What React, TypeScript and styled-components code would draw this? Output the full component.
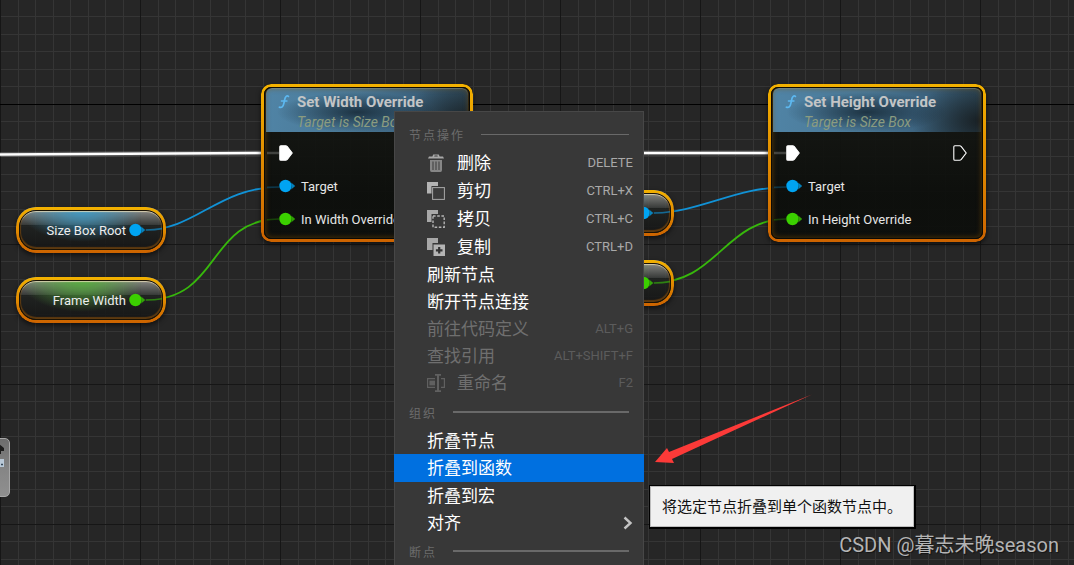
import React from "react";
import styled, { createGlobalStyle } from "styled-components";

const latin = `Roboto, "Noto Sans CJK SC", sans-serif`;
const cjk = `"Noto Sans CJK SC", Roboto, sans-serif`;

const GlobalStyle = createGlobalStyle`
  * { box-sizing: border-box; }
  body { margin: 0; background: #262626; font-family: ${latin}; }
`;

const line = (dir: string, color: string) => `linear-gradient(${dir}, ${color} 1px, transparent 1px)`;

const Graph = styled.main`
  position: relative;
  min-height: 100vh;
  overflow: hidden;
  background-color: #262626;
  background-image: ${line("to bottom", "#000")}, ${line("to right", "#161616")}, ${line("to bottom", "#161616")},
    ${line("to right", "#353535")}, ${line("to right", "#353535")}, ${line("to bottom", "#353535")},
    ${line("to bottom", "#353535")};
  background-size: 100% 1000px, 140px 100%, 100% 140px, 35px 100%, 35px 100%, 100% 35px, 100% 35px;
  background-position: 0 104px, 0 0, 0 104px, 0 0, 18px 0, 0 34px, 0 16px;
`;

const Wires = styled.svg`
  position: absolute;
  inset: 0;
  width: 100%;
  height: 100%;
  fill: none;
  pointer-events: none;
`;

const NodeFrame = styled.article<{ $x: number; $y: number; $w: number }>`
  position: absolute;
  isolation: isolate;
  left: ${(p) => p.$x}px;
  top: ${(p) => p.$y}px;
  width: ${(p) => p.$w}px;
  padding: 4px 5px 9px;
  border-radius: 10px;
  box-shadow: 0 2px 5px rgba(0, 0, 0, 0.6);
  background: linear-gradient(rgba(22, 24, 20, 0.9), rgba(12, 14, 11, 0.94) 70%);

  &::before {
    content: "";
    position: absolute;
    inset: 0;
    border-radius: inherit;
    padding: 3px;
    background: linear-gradient(#f3b200, #e08a00 50%, #cc6300);
    mask: linear-gradient(#000 0 0) content-box exclude, linear-gradient(#000 0 0);
  }

  &::after {
    content: "";
    position: absolute;
    inset: 3px;
    border-radius: 7px;
    border: 1px solid #0b0a06;
    box-shadow: inset 0 0 5px 1px rgba(130, 80, 0, 0.45);
    pointer-events: none;
  }
`;

const NodeHeader = styled.header`
  display: grid;
  grid-template-columns: 16px 1fr;
  column-gap: 4px;
  height: 44px;
  padding: 4px 11px 0;
  border-radius: 6px 6px 0 0;
  background: radial-gradient(ellipse 80px 20px at 45% 55%, rgba(18, 34, 46, 0.8), transparent),
    radial-gradient(ellipse 70px 40px at 100% 75%, rgba(20, 24, 26, 0.85), transparent),
    linear-gradient(100deg, #5084a6 0%, #4a7896 45%, #3d6480 70%, #2f4a5a 100%);
  box-shadow: inset 0 1px 0 rgba(130, 170, 190, 0.5);
`;

const NodeTitle = styled.h2`
  margin: 0;
  font-size: 15px;
  line-height: 20px;
  font-weight: 700;
  color: #c3c5c6;
  white-space: nowrap;
`;

const NodeSubtitle = styled.p`
  grid-column: 2;
  margin: 0;
  font-size: 14px;
  line-height: 18px;
  font-style: italic;
  color: #8b9c80;
  white-space: nowrap;
`;

const PinList = styled.div`
  display: flex;
  flex-direction: column;
  gap: 5px;
  padding: 7px 11px 0 13px;
`;

const PinRow = styled.div`
  display: flex;
  align-items: center;
  gap: 5px;
  height: 28px;
  font-size: 13px;
  color: #e6e6e6;
  white-space: nowrap;
`;

const Spacer = styled.span`
  flex: 1;
`;

const PillFrame = styled.article<{ $x: number; $y: number; $glow: string }>`
  position: absolute;
  isolation: isolate;
  left: ${(p) => p.$x}px;
  top: ${(p) => p.$y}px;
  width: 150px;
  height: 46px;
  padding: 0 20px;
  display: flex;
  align-items: center;
  justify-content: flex-end;
  gap: 3px;
  border-radius: 20px;
  font-size: 13px;
  color: #ededed;
  white-space: nowrap;
  box-shadow: 0 2px 5px rgba(0, 0, 0, 0.6);
  background: radial-gradient(ellipse 62px 32px at 44% 6%, ${(p) => p.$glow}, transparent),
    linear-gradient(rgba(150, 150, 145, 0.85) 8%, rgba(62, 65, 63, 0.85) 38%, rgba(32, 35, 33, 0.9) 40%, rgba(20, 20, 20, 0.9));

  &::before {
    content: "";
    position: absolute;
    inset: 0;
    border-radius: inherit;
    padding: 3px;
    background: linear-gradient(#f3b200, #e08a00 50%, #cc6300);
    mask: linear-gradient(#000 0 0) content-box exclude, linear-gradient(#000 0 0);
  }

  &::after {
    content: "";
    position: absolute;
    inset: 3px;
    border-radius: 17px;
    border: 1px solid #1a1204;
    box-shadow: inset 0 2px 1px -1px rgba(235, 225, 190, 0.8), inset 0 -1px 1px 1px rgba(130, 75, 10, 0.65);
  }
`;

const PinIcon = styled.svg`
  position: relative;
  z-index: 1;
  width: 17px;
  height: 16px;
  flex: none;
`;

const Menu = styled.div`
  position: absolute;
  left: 394px;
  top: 111px;
  width: 250px;
  padding-top: 7px;
  border: 1px solid #474747;
  background: #383838;
  font-family: ${cjk};
`;

const MenuHeading = styled.div<{ $thin?: boolean }>`
  display: flex;
  align-items: center;
  gap: 16px;
  height: 30px;
  padding: 0 14px;
  font-size: 12px;
  letter-spacing: 2px;
  color: #6c6c6c;

  &::after {
    content: "";
    flex: 1;
    height: ${(p) => (p.$thin ? 1 : 2)}px;
    background: #696969;
  }
`;

const MenuItem = styled.button<{ $tall?: boolean; $active?: boolean }>`
  display: flex;
  align-items: center;
  gap: 12px;
  width: calc(100% + 2px);
  height: ${(p) => (p.$tall ? 28 : 27)}px;
  margin: 0 -1px;
  padding: 0 11px 0 33px;
  border: 0;
  background: ${(p) => (p.$active ? "#0070e0" : "transparent")};
  font-family: inherit;
  font-size: 17px;
  line-height: 24px;
  color: #fff;
  text-align: left;
  white-space: nowrap;

  &:disabled {
    color: #6f6f6f;
  }

  kbd {
    margin-left: auto;
    font-family: ${latin};
    font-size: 13px;
    color: #a9a9a9;
  }

  &:disabled kbd {
    color: #5c5c5c;
  }
`;

const ItemLabel = styled.span`
  padding-bottom: 2px;
`;

const ItemIcon = styled.svg`
  width: 18px;
  height: 18px;
  flex: none;
`;

const Chevron = styled.svg`
  width: 10px;
  height: 14px;
  margin-left: auto;
`;

const Tooltip = styled.div`
  position: absolute;
  left: 649px;
  top: 485px;
  padding: 7px 12px 9px;
  border: solid #000;
  border-width: 1px 2px 2px 1px;
  box-shadow: inset 0 0 0 1px #bdbdbd;
  background: #f0f0f0;
  font-family: ${cjk};
  font-size: 15px;
  line-height: 25px;
  color: #111;
  white-space: nowrap;
`;

const Watermark = styled.div`
  position: absolute;
  right: 15px;
  bottom: 6px;
  font-size: 20px;
  line-height: 28px;
  color: #b4b4b4;
  text-shadow: 1px 1px 1px rgba(0, 0, 0, 0.5);
  white-space: nowrap;
`;

const Arrow = styled.svg`
  position: absolute;
  left: 654px;
  top: 392px;
  width: 160px;
  height: 74px;
`;

const SidePanel = styled.aside`
  position: absolute;
  left: -40px;
  top: 438px;
  width: 50px;
  height: 59px;
  border: 1px solid #a8a8a8;
  border-radius: 5px;
  background: linear-gradient(#6d6d6d, #868686 55%, #8f8f8f);

  svg {
    position: absolute;
    right: 0;
    top: 0;
    width: 10px;
    height: 57px;
  }
`;

const BLUE = "#00a4f2";
const GREEN = "#3bd000";

function DataPin({ color }: { color: string }) {
  return (
    <PinIcon viewBox="0 0 17 16">
      <circle cx="6.5" cy="8" r="6.2" fill={color} />
      <path d="M12.2 4.4 L16.2 8 L12.2 11.6 Q13.6 8 12.2 4.4Z" fill={color} opacity="0.75" />
    </PinIcon>
  );
}

function ExecPin({ filled }: { filled?: boolean }) {
  return (
    <PinIcon viewBox="0 0 17 16">
      <path
        d="M1.8 .8 H6.6 Q7.6 .8 8.3 1.6 L13.2 8 L8.3 14.4 Q7.6 15.2 6.6 15.2 H1.8 Q.8 15.2 .8 14.2 V1.8 Q.8 .8 1.8 .8Z"
        fill={filled ? "#fff" : "#0d0f0c"}
        stroke="#fff"
        strokeWidth="1.1"
      />
    </PinIcon>
  );
}

function FunctionIcon() {
  return (
    <svg width="16" height="20" viewBox="0 0 16 20" fill="none" stroke="#5db8f0" strokeLinecap="round">
      <path d="M11.4 4.4 Q9.6 3 8.3 5.6 Q7.5 8 6.8 11.6 Q5.8 16.4 2.4 15.2" strokeWidth="1.7" />
      <path d="M4.4 9 H10" strokeWidth="1.4" />
    </svg>
  );
}

function FunctionNode({ x, width, title, label, output }: { x: number; width: number; title: string; label: string; output?: boolean }) {
  return (
    <NodeFrame $x={x} $y={84} $w={width}>
      <NodeHeader>
        <FunctionIcon />
        <NodeTitle>{title}</NodeTitle>
        <NodeSubtitle>Target is Size Box</NodeSubtitle>
      </NodeHeader>
      <PinList>
        <PinRow>
          <ExecPin filled />
          <Spacer />
          {output && <ExecPin />}
        </PinRow>
        <PinRow>
          <DataPin color={BLUE} />
          Target
        </PinRow>
        <PinRow>
          <DataPin color={GREEN} />
          {label}
        </PinRow>
      </PinList>
    </NodeFrame>
  );
}

function VariableNode({ x, y, color, glow, label }: { x: number; y: number; color: string; glow: string; label?: string }) {
  return (
    <PillFrame $x={x} $y={y} $glow={glow}>
      {label}
      <DataPin color={color} />
    </PillFrame>
  );
}

const TrashIcon = () => (
  <ItemIcon viewBox="0 0 18 18">
    <path d="M2 2.4 H5.4 L6.2 .4 H11.8 L12.6 2.4 H16 L17 4.6 H1Z M7.2 2.4 H10.8 L10.4 1.5 H7.6Z" fill="#a8a8a8" fillRule="evenodd" />
    <path d="M3 6 H15 V16 Q15 18 13.4 18 H4.6 Q3 18 3 16Z" fill="#868686" />
    <path d="M6 7.5 V16 M9 7.5 V16 M12 7.5 V16" stroke="#484848" strokeWidth="1.2" />
  </ItemIcon>
);

const CutIcon = () => (
  <ItemIcon viewBox="0 0 18 18">
    <path d="M0 0 H11 V4 H4.5 V11.5 H0Z" fill="#b4b4b4" />
    <rect x="5.6" y="5.6" width="11.8" height="11.8" fill="#3c3c3c" stroke="#a8a8a8" />
  </ItemIcon>
);

const CopyIcon = () => (
  <ItemIcon viewBox="0 0 18 18">
    <path d="M0 0 H11 V4 H4.5 V12 H0Z" fill="#a8a8a8" />
    <rect x="6" y="6" width="11.2" height="11.2" fill="none" stroke="#b4b4b4" strokeWidth="1.4" strokeDasharray="2.6 1.6" />
  </ItemIcon>
);

const DuplicateIcon = () => (
  <ItemIcon viewBox="0 0 18 18">
    <path d="M0 0 H11 V5 H5.5 V12 H0Z" fill="#a8a8a8" />
    <rect x="6.5" y="6.5" width="11.5" height="11.5" fill="#b4b4b4" />
    <path d="M12.2 9 V15.6 M8.9 12.3 H15.5" stroke="#333" strokeWidth="2.2" />
  </ItemIcon>
);

const RenameIcon = () => (
  <ItemIcon viewBox="0 0 18 18" fill="none" stroke="#606060">
    <path d="M8 4.6 H.6 V13.4 H8 M14 4.6 H17.4 V13.4 H14" strokeWidth="1.2" />
    <rect x="2.4" y="6.6" width="5.6" height="4.8" fill="#606060" stroke="none" />
    <path d="M8 .8 H14 M8 17.2 H14 M11 .8 V17.2" strokeWidth="2" />
  </ItemIcon>
);

export default function App() {
  return (
    <>
      <GlobalStyle />
      <Graph>
        <Wires>
          <g strokeWidth="5" stroke="#fff" opacity="0.2">
            <path d="M0 154.5 L264 153" />
            <path d="M600 153 H770" />
          </g>
          <g strokeWidth="2.4" stroke="#fff">
            <path d="M0 154.5 L264 153" />
            <path d="M600 153 H770" />
          </g>
          <g strokeWidth="1.8" stroke="#1192d6">
            <path d="M145 230 C196 230 218 187 280 187" />
            <path d="M652 213 C700 213 735 187 788 187" />
          </g>
          <g strokeWidth="1.8" stroke="#37b80c">
            <path d="M145 300 C222 300 206 219 280 219" />
            <path d="M652 283 C718 283 724 219 788 219" />
          </g>
        </Wires>

        <SidePanel>
          <svg viewBox="0 0 10 57">
            <path d="M0 5 L5 9 V12 H2 V15 H0Z" fill="#1d1d1d" />
            <rect x="0" y="20" width="5" height="8" fill="#b9c8d6" />
            <path d="M0 25.5 H1 M2 25.5 H4" stroke="#34485a" strokeWidth="1.5" />
          </svg>
        </SidePanel>

        <VariableNode x={16} y={207} color={BLUE} glow="rgba(60, 155, 200, 0.95)" label="Size Box Root" />
        <VariableNode x={16} y={277} color={GREEN} glow="rgba(85, 175, 60, 0.95)" label="Frame Width" />
        <VariableNode x={524} y={190} color={BLUE} glow="rgba(60, 155, 200, 0.95)" />
        <VariableNode x={524} y={260} color={GREEN} glow="rgba(85, 175, 60, 0.95)" />

        <FunctionNode x={261} width={212} title="Set Width Override" label="In Width Override" />
        <FunctionNode x={768} width={218} title="Set Height Override" label="In Height Override" output />

        <Wires>
          <path d="M267 153 H279 M774 153 H786" stroke="#fff" strokeWidth="2.4" opacity="0.2" />
          <g stroke="#1192d6" strokeWidth="1.6">
            <path d="M146 230 Q155 230 162 228.6 M654 213 Q663 213 670 211.8" opacity="0.6" />
            <path d="M267 187.4 L279 187 M774 187.4 L786 187" opacity="0.25" />
          </g>
          <g stroke="#37b80c" strokeWidth="1.6">
            <path d="M146 300 Q155 300 162 298.8 M654 283 Q663 283 670 281.6" opacity="0.6" />
            <path d="M267 219.8 L279 219 M774 219.8 L786 219" opacity="0.25" />
          </g>
        </Wires>

        <Menu>
          <MenuHeading $thin>节点操作</MenuHeading>
          <MenuItem $tall><TrashIcon /><ItemLabel>删除</ItemLabel><kbd>DELETE</kbd></MenuItem>
          <MenuItem $tall><CutIcon /><ItemLabel>剪切</ItemLabel><kbd>CTRL+X</kbd></MenuItem>
          <MenuItem $tall><CopyIcon /><ItemLabel>拷贝</ItemLabel><kbd>CTRL+C</kbd></MenuItem>
          <MenuItem $tall><DuplicateIcon /><ItemLabel>复制</ItemLabel><kbd>CTRL+D</kbd></MenuItem>
          <MenuItem><ItemLabel>刷新节点</ItemLabel></MenuItem>
          <MenuItem><ItemLabel>断开节点连接</ItemLabel></MenuItem>
          <MenuItem disabled><ItemLabel>前往代码定义</ItemLabel><kbd>ALT+G</kbd></MenuItem>
          <MenuItem disabled><ItemLabel>查找引用</ItemLabel><kbd>ALT+SHIFT+F</kbd></MenuItem>
          <MenuItem disabled $tall><RenameIcon /><ItemLabel>重命名</ItemLabel><kbd>F2</kbd></MenuItem>
          <MenuHeading>组织</MenuHeading>
          <MenuItem><ItemLabel>折叠节点</ItemLabel></MenuItem>
          <MenuItem $tall $active><ItemLabel>折叠到函数</ItemLabel></MenuItem>
          <MenuItem><ItemLabel>折叠到宏</ItemLabel></MenuItem>
          <MenuItem>
            <ItemLabel>对齐</ItemLabel>
            <Chevron viewBox="0 0 10 14" fill="none" stroke="#c4c4c4" strokeWidth="2.4">
              <path d="M1.5 1.5 L7.5 7 L1.5 12.5" />
            </Chevron>
          </MenuItem>
          <MenuHeading>断点</MenuHeading>
        </Menu>

        <Tooltip role="tooltip">将选定节点折叠到单个函数节点中。</Tooltip>

        <Arrow viewBox="0 0 160 74">
          <path d="M1 70 L13 56 L15 60 L158 2.5 L18 67 L20 71Z" fill="#fc3a38" />
        </Arrow>

        <Watermark>CSDN @暮志未晚season</Watermark>
      </Graph>
    </>
  );
}
